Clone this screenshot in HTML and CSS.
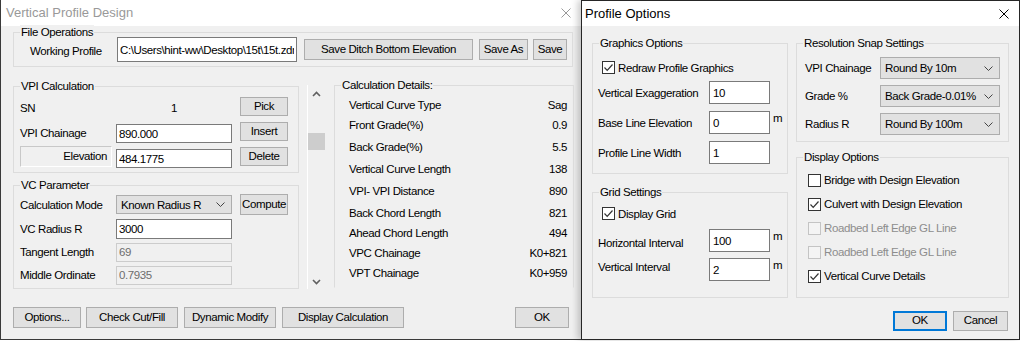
FILE: index.html
```html
<!DOCTYPE html>
<html lang="en">
<head>
<meta charset="UTF-8">
<title>Vertical Profile Design</title>
<link rel="stylesheet" href="styles.css">
</head>
<body>
<div class="desk">

    <!-- main dialog (inactive) -->
    <div class="dlg dlg-main">
        <div class="titlebar inactive">
            <span class="title">Vertical Profile Design</span>
            <svg class="close" width="10" height="10" viewBox="0 0 10 10"><path d="M0.5 0.5 L9.5 9.5 M9.5 0.5 L0.5 9.5"/></svg>
        </div>
        <div class="main-body">
            <div class="group file-group">
                <span class="legend">File Operations</span>
                <div class="file-row">
                    <span class="file-label">Working Profile</span>
                    <input class="edit path-edit" type="text" value="C:\Users\hint-ww\Desktop\15t\15t.zdm">
                    <button class="btn ditch-btn">Save Ditch Bottom Elevation</button>
                    <button class="btn saveas-btn">Save As</button>
                    <button class="btn save-btn">Save</button>
                </div>
            </div>

            <div class="main-area">
                <div class="left-col">
                    <div class="group vpi-group">
                        <span class="legend">VPI Calculation</span>
                        <div class="form-grid vpi-grid">
                            <span class="lbl">SN</span>
                            <span class="lbl sn-value">1</span>
                            <button class="btn side-btn">Pick</button>

                            <span class="lbl">VPI Chainage</span>
                            <input class="edit low" type="text" value="890.000">
                            <button class="btn side-btn">Insert</button>

                            <span class="sunken">Elevation</span>
                            <input class="edit low" type="text" value="484.1775">
                            <button class="btn side-btn">Delete</button>
                        </div>
                    </div>

                    <div class="group vc-group">
                        <span class="legend">VC Parameter</span>
                        <div class="form-grid vc-grid">
                            <span>Calculation Mode</span>
                            <div class="combo">
                                <span>Known Radius R</span>
                                <svg class="combo-arrow" width="9" height="5" viewBox="0 0 9 5"><path d="M0.5 0.5 L4.5 4.5 L8.5 0.5"/></svg>
                            </div>
                            <button class="btn side-btn compute-btn">Compute</button>

                            <span>VC Radius R</span>
                            <input class="edit radius-edit" type="text" value="3000">
                            <span></span>

                            <span>Tangent Length</span>
                            <input class="edit off" type="text" value="69" readonly>
                            <span></span>

                            <span>Middle Ordinate</span>
                            <input class="edit off" type="text" value="0.7935" readonly>
                            <span></span>
                        </div>
                    </div>
                </div>

                <div class="scrollbar">
                    <svg class="scroll-arrow up" width="9" height="6" viewBox="0 0 9 6"><path d="M1 5 L4.5 1.5 L8 5"/></svg>
                    <div class="scroll-thumb"></div>
                    <svg class="scroll-arrow down" width="9" height="6" viewBox="0 0 9 6"><path d="M1 1 L4.5 4.5 L8 1"/></svg>
                </div>

                <div class="group calc-group">
                    <span class="legend">Calculation Details:</span>
                    <div class="calc-list">
                        <div class="calc-row"><span>Vertical Curve Type</span><span>Sag</span></div>
                        <div class="calc-row"><span>Front Grade(%)</span><span>0.9</span></div>
                        <div class="calc-row"><span>Back Grade(%)</span><span>5.5</span></div>
                        <div class="calc-row"><span>Vertical Curve Length</span><span>138</span></div>
                        <div class="calc-row"><span>VPI- VPI Distance</span><span>890</span></div>
                        <div class="calc-row"><span>Back Chord Length</span><span>821</span></div>
                        <div class="calc-row"><span>Ahead Chord Length</span><span>494</span></div>
                        <div class="calc-row"><span>VPC Chainage</span><span>K0+821</span></div>
                        <div class="calc-row"><span>VPT Chainage</span><span>K0+959</span></div>
                    </div>
                </div>
            </div>

            <div class="bottom-bar">
                <button class="btn options-btn">Options...</button>
                <button class="btn wide-btn">Check Cut/Fill</button>
                <button class="btn wide-btn">Dynamic Modify</button>
                <button class="btn display-btn">Display Calculation</button>
                <button class="btn ok-btn">OK</button>
            </div>
        </div>
    </div>

    <!-- options dialog (active) -->
    <div class="dlg dlg-options">
        <div class="titlebar">
            <span class="title">Profile Options</span>
            <svg class="close" width="10" height="10" viewBox="0 0 10 10"><path d="M0.5 0.5 L9.5 9.5 M9.5 0.5 L0.5 9.5"/></svg>
        </div>
        <div class="opt-body">
            <div class="opt-cols">
                <div class="opt-col left">
                    <div class="group gfx-group">
                        <span class="legend">Graphics Options</span>
                        <div class="check-row indent">
                            <span class="check on"><svg width="11" height="11" viewBox="0 0 11 11"><path d="M1.5 5.5 L4.2 8.3 L9.5 2.5"/></svg></span>
                            <span>Redraw Profile Graphics</span>
                        </div>
                        <div class="num-rows gfx-rows">
                            <div class="num-row"><span class="num-label">Vertical Exaggeration</span><input class="edit num-edit" type="text" value="10"></div>
                            <div class="num-row"><span class="num-label">Base Line Elevation</span><input class="edit num-edit" type="text" value="0"><span class="unit">m</span></div>
                            <div class="num-row"><span class="num-label">Profile Line Width</span><input class="edit num-edit" type="text" value="1"></div>
                        </div>
                    </div>

                    <div class="group grid-group">
                        <span class="legend">Grid Settings</span>
                        <div class="check-row indent">
                            <span class="check on"><svg width="11" height="11" viewBox="0 0 11 11"><path d="M1.5 5.5 L4.2 8.3 L9.5 2.5"/></svg></span>
                            <span>Display Grid</span>
                        </div>
                        <div class="num-rows grid-rows">
                            <div class="num-row"><span class="num-label">Horizontal Interval</span><input class="edit num-edit" type="text" value="100"><span class="unit">m</span></div>
                            <div class="num-row"><span class="num-label">Vertical Interval</span><input class="edit num-edit" type="text" value="2"><span class="unit">m</span></div>
                        </div>
                    </div>
                </div>

                <div class="opt-col right">
                    <div class="group snap-group">
                        <span class="legend">Resolution Snap Settings</span>
                        <div class="snap-row">
                            <span class="snap-label">VPI Chainage</span>
                            <div class="combo snap-combo"><span>Round By 10m</span><svg class="combo-arrow" width="9" height="5" viewBox="0 0 9 5"><path d="M0.5 0.5 L4.5 4.5 L8.5 0.5"/></svg></div>
                        </div>
                        <div class="snap-row">
                            <span class="snap-label">Grade %</span>
                            <div class="combo snap-combo"><span>Back Grade-0.01%</span><svg class="combo-arrow" width="9" height="5" viewBox="0 0 9 5"><path d="M0.5 0.5 L4.5 4.5 L8.5 0.5"/></svg></div>
                        </div>
                        <div class="snap-row">
                            <span class="snap-label">Radius R</span>
                            <div class="combo snap-combo"><span>Round By 100m</span><svg class="combo-arrow" width="9" height="5" viewBox="0 0 9 5"><path d="M0.5 0.5 L4.5 4.5 L8.5 0.5"/></svg></div>
                        </div>
                    </div>

                    <div class="group disp-group">
                        <span class="legend">Display Options</span>
                        <div class="check-row disp"><span class="check"></span><span>Bridge with Design Elevation</span></div>
                        <div class="check-row disp"><span class="check on"><svg width="11" height="11" viewBox="0 0 11 11"><path d="M1.5 5.5 L4.2 8.3 L9.5 2.5"/></svg></span><span>Culvert with Design Elevation</span></div>
                        <div class="check-row disp disabled"><span class="check"></span><span>Roadbed Left Edge GL Line</span></div>
                        <div class="check-row disp disabled"><span class="check"></span><span>Roadbed Left Edge GL Line</span></div>
                        <div class="check-row disp"><span class="check on"><svg width="11" height="11" viewBox="0 0 11 11"><path d="M1.5 5.5 L4.2 8.3 L9.5 2.5"/></svg></span><span>Vertical Curve Details</span></div>
                    </div>
                </div>
            </div>

            <div class="opt-buttons">
                <button class="btn default-btn">OK</button>
                <button class="btn cancel-btn">Cancel</button>
            </div>
        </div>
    </div>

</div>
</body>
</html>
```

FILE: styles.css
```css
body {
    margin: 0;
    background: #ffffff;
    font-family: "Liberation Sans", Arial, sans-serif;
    font-size: 11.5px;
    letter-spacing: -0.4px;
    color: #000;
}

.desk {
    display: flex;
    width: 1020px;
    height: 341px;
}

/* dialogs */
.dlg {
    box-sizing: border-box;
    height: 340px;
    background: #f0f0f0;
    display: flex;
    flex-direction: column;
    flex-shrink: 0;
}

.dlg-main {
    width: 581px;
    border-left: 1px solid #3a3a3a;
    border-bottom: 1px solid #3a3a3a;
}

.dlg-options {
    width: 439px;
    border: 1px solid #262626;
    box-shadow: -3px 0 7px rgba(0, 0, 0, 0.22);
}

.titlebar {
    display: flex;
    align-items: center;
    justify-content: space-between;
    height: 26px;
    padding: 0 10px 0 5px;
    background: #fff;
    flex-shrink: 0;
}

.dlg-options .titlebar {
    height: 25px;
    padding-left: 3px;
}

.title {
    font-size: 13px;
    letter-spacing: 0;
    line-height: 18px;
}

.inactive .title {
    color: #999;
}

.close path {
    stroke: #000;
    stroke-width: 1;
    fill: none;
}

.inactive .close path {
    stroke: #999;
}

/* common controls */
.group {
    position: relative;
    box-sizing: border-box;
    border: 1px solid #dcdcdc;
    flex-shrink: 0;
}

.legend {
    position: absolute;
    top: -8px;
    left: 6px;
    padding: 0 1px;
    line-height: 14px;
    background: #f0f0f0;
}

.btn {
    box-sizing: border-box;
    height: 21px;
    padding: 0;
    font-family: inherit;
    font-size: inherit;
    letter-spacing: inherit;
    line-height: 1;
    color: #000;
    background: #e1e1e1;
    border: 1px solid #adadad;
    flex-shrink: 0;
}

.edit {
    box-sizing: border-box;
    height: 19px;
    padding: 0 2px;
    font-family: inherit;
    font-size: inherit;
    letter-spacing: inherit;
    color: #000;
    background: #fff;
    border: 1px solid #7a7a7a;
    outline: none;
}

.edit.off {
    color: #6d6d6d;
    background: #f0f0f0;
    border-color: #cccccc;
}

.combo {
    box-sizing: border-box;
    display: flex;
    align-items: center;
    justify-content: space-between;
    height: 19px;
    padding: 0 6px 0 4px;
    background: #e1e1e1;
    border: 1px solid #adadad;
}

.combo-arrow path {
    stroke: #444;
    stroke-width: 1;
    fill: none;
}

.check {
    box-sizing: border-box;
    display: inline-flex;
    align-items: center;
    justify-content: center;
    width: 13px;
    height: 13px;
    background: #fff;
    border: 1px solid #333;
    flex-shrink: 0;
}

.check svg path {
    stroke: #333;
    stroke-width: 1.2;
    fill: none;
}

/* main dialog body */
.main-body {
    display: flex;
    flex-direction: column;
    padding: 0 7px 0 12px;
    flex: 1;
}

.file-group {
    margin-top: 6px;
    width: 560px;
    height: 35px;
    padding: 4px 0 0 16px;
}

.file-row {
    display: flex;
    align-items: center;
    height: 25px;
}

.file-label {
    width: 87px;
    padding-top: 2px;
    flex-shrink: 0;
}

.path-edit {
    width: 180px;
    height: 25px;
    flex-shrink: 0;
}

.ditch-btn {
    width: 169px;
    margin-left: 7px;
    height: 21px;
}

.saveas-btn {
    width: 49px;
    margin-left: 6px;
}

.save-btn {
    width: 34px;
    margin-left: 5px;
}

.main-area {
    display: flex;
    margin-top: 18px;
    height: 204px;
}

.left-col {
    width: 286px;
    display: flex;
    flex-direction: column;
    flex-shrink: 0;
}

.vpi-group {
    margin-top: 1px;
    height: 87px;
    padding: 10px 0 0 6px;
}

.vc-group {
    margin-top: 12px;
    height: 104px;
    padding: 8px 0 0 6px;
}

.form-grid {
    display: grid;
    grid-template-columns: 96px 116px 56px;
    align-items: center;
}

.form-grid > .side-btn {
    margin-left: 8px;
}

.vpi-grid {
    grid-template-rows: 20px 20px 20px;
    row-gap: 5px;
}

.vpi-grid .lbl {
    align-self: start;
    margin-top: 4px;
    line-height: 14px;
}

.vc-grid {
    grid-template-rows: 21px 21px 20px 20px;
    row-gap: 3px;
}

.side-btn {
    height: 19px;
    width: 48px;
}

.vpi-grid .side-btn {
    align-self: start;
}

.compute-btn {
    height: 21px;
}

.vpi-grid .low {
    align-self: start;
    margin-top: 2px;
}

.radius-edit {
    height: 20px;
}

.sn-value {
    text-align: center;
}

.sunken {
    box-sizing: border-box;
    width: 92px;
    height: 21px;
    align-self: start;
    margin-top: -1px;
    padding-right: 4px;
    text-align: right;
    line-height: 19px;
    border: 1px solid;
    border-color: #c8c8c8 #ffffff #ffffff #c8c8c8;
}

.scrollbar {
    box-sizing: border-box;
    position: relative;
    width: 18px;
    margin-left: 8px;
    height: 204px;
    border-left: 1px solid #fff;
    flex-shrink: 0;
}

.scroll-arrow {
    position: absolute;
    left: 4px;
}

.scroll-arrow path {
    stroke: #606060;
    stroke-width: 1.6;
    fill: none;
}

.scroll-arrow.up {
    top: 6px;
}

.scroll-arrow.down {
    bottom: 4px;
}

.scroll-thumb {
    position: absolute;
    top: 48px;
    left: 0;
    width: 17px;
    height: 17px;
    background: #cdcdcd;
}

.calc-group {
    margin-left: 9px;
    width: 240px;
    height: 203px;
    padding: 10px 6px 0 14px;
    border-bottom-color: transparent;
}

.calc-list {
    display: flex;
    flex-direction: column;
}

.calc-row {
    display: flex;
    justify-content: space-between;
    align-items: center;
    height: 20px;
}

.calc-row:nth-child(1) { height: 18px; }
.calc-row:nth-child(2) { height: 21px; }
.calc-row:nth-child(3) { height: 23px; }
.calc-row:nth-child(4) { height: 22px; }
.calc-row:nth-child(5) { height: 22px; }
.calc-row:nth-child(6) { height: 21px; }

.bottom-bar {
    display: flex;
    margin-top: 18px;
    padding-right: 5px;
}

.bottom-bar .btn {
    margin-right: 6px;
}

.options-btn { width: 68px; }
.bottom-bar .options-btn { margin-right: 5px; }
.wide-btn { width: 92px; }
.display-btn { width: 122px; }

.bottom-bar .ok-btn {
    width: 54px;
    margin-left: auto;
    margin-right: 0;
}

/* options dialog body */
.opt-body {
    display: flex;
    flex-direction: column;
    padding: 17px 10px 0 10px;
}

.opt-cols {
    display: flex;
    gap: 8px;
}

.opt-col {
    display: flex;
    flex-direction: column;
}

.opt-col.left { width: 196px; }
.opt-col.right { width: 213px; }

.gfx-group {
    height: 131px;
    padding: 17px 0 0 5px;
}

.grid-group {
    margin-top: 18px;
    height: 106px;
    padding: 14px 0 0 5px;
}

.check-row {
    display: flex;
    align-items: center;
    gap: 3px;
    height: 13px;
}

.check-row.indent {
    margin-left: 4px;
}

.num-rows {
    display: flex;
    flex-direction: column;
    gap: 7px;
    margin-top: 7px;
}

.grid-rows {
    margin-top: 9px;
    gap: 6px;
}

.num-row {
    display: flex;
    align-items: center;
    height: 23px;
}

.num-label {
    width: 111px;
}

.grid-rows .num-row:first-child .num-label {
    padding-top: 5px;
}

.grid-rows .num-row:last-child .num-label {
    padding-bottom: 5px;
}

.num-edit {
    width: 61px;
    height: 23px;
    padding-left: 3px;
}

.unit {
    margin-left: 3px;
    align-self: flex-start;
    line-height: 14px;
}

.snap-group {
    height: 99px;
    padding: 13px 0 0 8px;
    display: flex;
    flex-direction: column;
    gap: 6px;
}

.snap-row {
    display: flex;
    align-items: center;
    height: 22px;
}

.snap-label {
    width: 75px;
}

.snap-combo {
    width: 120px;
    height: 22px;
}

.disp-group {
    margin-top: 15px;
    height: 141px;
    padding: 10px 0 0 11px;
}

.check-row.disp {
    height: 24px;
}

.check-row.disabled {
    color: #8d8d8d;
}

.check-row.disabled .check {
    background: #f4f4f4;
    border-color: #c4c4c4;
}

.opt-buttons {
    display: flex;
    justify-content: flex-end;
    gap: 6px;
    margin-top: 13px;
    padding-right: 1px;
}

.default-btn {
    width: 54px;
    height: 20px;
    border: 2px solid #0078d7;
}

.cancel-btn {
    width: 55px;
    height: 20px;
}
```
